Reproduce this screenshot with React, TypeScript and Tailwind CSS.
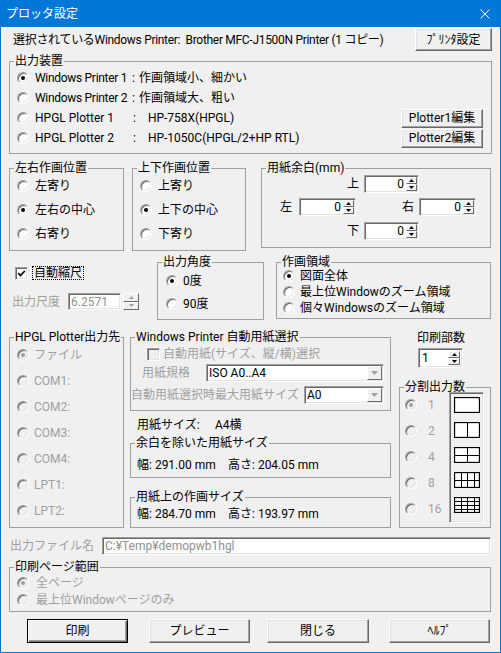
import React from "react";

const SUNKEN =
  "border border-t-[#a0a0a0] border-l-[#a0a0a0] border-r-white border-b-white shadow-[inset_1px_1px_0_#696969,inset_-1px_-1px_0_#e3e3e3]";
const RAISED =
  "border border-t-white border-l-white border-r-[#696969] border-b-[#696969] shadow-[inset_-1px_-1px_0_#a0a0a0,inset_1px_1px_0_#e3e3e3]";
const RAISED_SMALL =
  "border border-t-white border-l-white border-r-[#696969] border-b-[#696969]";
const DIS = "text-[#a0a0a0]";

function Radio({ checked, disabled, className = "" }: { checked?: boolean; disabled?: boolean; className?: string }) {
  return (
    <span
      className={`flex h-[12px] w-[12px] shrink-0 items-center justify-center rounded-full border border-t-[#a0a0a0] border-l-[#a0a0a0] border-r-white border-b-white shadow-[inset_1px_1px_0_#696969,inset_-1px_-1px_0_#e3e3e3] ${
        disabled ? "bg-[#f0f0f0]" : "bg-white"
      } ${className}`}
    >
      {checked && <span className={`h-[4px] w-[4px] rounded-full ${disabled ? "bg-[#a0a0a0]" : "bg-black"}`} />}
    </span>
  );
}

function Check({ checked, disabled, className = "" }: { checked?: boolean; disabled?: boolean; className?: string }) {
  return (
    <span
      className={`flex h-[13px] w-[13px] shrink-0 items-center justify-center ${SUNKEN} ${
        disabled ? "bg-[#f0f0f0]" : "bg-white"
      } ${className}`}
    >
      {checked && (
        <svg width="9" height="9" viewBox="0 0 9 9">
          <path d="M1.2 4.2L3.5 6.6L7.8 2" stroke="black" strokeWidth="1.7" fill="none" />
        </svg>
      )}
    </span>
  );
}

function Btn({ children, className = "", def }: { children: React.ReactNode; className?: string; def?: boolean }) {
  return (
    <button
      type="button"
      className={`flex shrink-0 items-center justify-center bg-[#f0f0f0] leading-[14px] ${
        def
          ? "border border-black shadow-[inset_1px_1px_0_#fff,inset_-1px_-1px_0_#696969,inset_-2px_-2px_0_#a0a0a0]"
          : RAISED
      } ${className}`}
    >
      {children}
    </button>
  );
}

function Group({ title, className = "", children }: { title: string; className?: string; children?: React.ReactNode }) {
  return (
    <fieldset className={`shrink-0 border border-[#a0a0a0] ${className}`}>
      <legend className="ml-[4px] whitespace-nowrap px-[1px] leading-[14px]">{title}</legend>
      {children}
    </fieldset>
  );
}

function Tri({ up, color, w = 5, h = 3 }: { up?: boolean; color: string; w?: number; h?: number }) {
  return (
    <svg width={w} height={h} viewBox={`0 0 ${w} ${h}`}>
      <path d={up ? `M0 ${h}L${w / 2} 0L${w} ${h}Z` : `M0 0L${w} 0L${w / 2} ${h}Z`} fill={color} />
    </svg>
  );
}

function SpinArrows({ className = "", color }: { className?: string; color: string }) {
  return (
    <div className={`flex shrink-0 flex-col ${className}`}>
      <div className={`flex flex-1 items-center justify-center bg-[#f0f0f0] ${RAISED_SMALL}`}>
        <Tri up color={color} />
      </div>
      <div className={`flex flex-1 items-center justify-center bg-[#f0f0f0] ${RAISED_SMALL}`}>
        <Tri color={color} />
      </div>
    </div>
  );
}

function MarginSpin({ className = "" }: { className?: string }) {
  return (
    <div className={`flex h-[18px] shrink-0 bg-white ${SUNKEN} ${className}`}>
      <span className="flex-1 self-center pr-[2px] text-right">0</span>
      <SpinArrows className="my-[1px] mr-[1px] w-[11px]" color="#000" />
    </div>
  );
}

function Combo({ text, className = "" }: { text: string; className?: string }) {
  return (
    <div className={`flex h-[18px] shrink-0 bg-white ${SUNKEN} ${className}`}>
      <span className="flex-1 self-center pl-[2px]">{text}</span>
      <div className={`m-[1px] flex w-[15px] items-center justify-center bg-[#f0f0f0] ${RAISED_SMALL}`}>
        <Tri color="#a0a0a0" w={7} h={4} />
      </div>
    </div>
  );
}

function GridIcon({ cols, rows }: { cols: number; rows: number }) {
  const W = 26;
  const H = 16;
  const lines: React.ReactNode[] = [];
  for (let i = 1; i < cols; i++) {
    const x = Math.round((W * i) / cols) + 0.5;
    lines.push(<path key={`c${i}`} d={`M${x} 0V${H}`} stroke="black" strokeWidth="1" />);
  }
  for (let j = 1; j < rows; j++) {
    const y = Math.round((H * j) / rows) + 0.5;
    lines.push(<path key={`r${j}`} d={`M0 ${y}H${W}`} stroke="black" strokeWidth="1" />);
  }
  return (
    <svg width={W} height={H} viewBox={`0 0 ${W} ${H}`} className="shrink-0">
      <rect x="0.5" y="0.5" width={W - 1} height={H - 1} fill="white" stroke="black" strokeWidth="1.3" />
      {lines}
    </svg>
  );
}

export default function App() {
  return (
    <div className="flex h-[653px] w-[501px] flex-col overflow-hidden border-x border-b border-[#0078d7] bg-[#f0f0f0] font-['Roboto','Noto_Sans_CJK_JP',sans-serif] text-[12px] leading-[14px] text-black">
      {/* Title bar */}
      <div className="flex h-[27px] shrink-0 items-center bg-[#0078d7] pl-[5px] text-white">
        <span>プロッタ設定</span>
        <svg className="ml-auto mr-[10px]" width="10" height="10" viewBox="0 0 10 10">
          <path d="M0.5 0.5L9.5 9.5M9.5 0.5L0.5 9.5" stroke="white" strokeWidth="1" />
        </svg>
      </div>

      {/* Header */}
      <div className="mt-[1px] flex h-[23px] shrink-0 items-center">
        <span className="ml-[12px] whitespace-pre tracking-[-0.3px]">選択されているWindows Printer:  Brother MFC-J1500N Printer (1 コピー)</span>
        <Btn className="ml-auto mr-[8px] h-[23px] w-[77px]">ﾌﾟﾘﾝﾀ設定</Btn>
      </div>

      {/* 出力装置 */}
      <Group title="出力装置" className="ml-[8px] mt-[3px] h-[100px] w-[483px]">
        <div className="flex flex-col">
          <div className="flex h-[20px] items-center">
            <Radio checked className="ml-[7px]" />
            <span className="ml-[6px] w-[97px] shrink-0 whitespace-nowrap tracking-[-0.3px]">Windows Printer 1</span>
            <span>:</span>
            <span className="ml-[4px]">作画領域小、細かい</span>
          </div>
          <div className="flex h-[20px] items-center">
            <Radio className="ml-[7px]" />
            <span className="ml-[6px] w-[97px] shrink-0 whitespace-nowrap tracking-[-0.3px]">Windows Printer 2</span>
            <span>:</span>
            <span className="ml-[4px]">作画領域大、粗い</span>
          </div>
          <div className="flex h-[20px] items-center">
            <Radio className="ml-[7px]" />
            <span className="ml-[6px] w-[98px] shrink-0 whitespace-nowrap">HPGL Plotter 1</span>
            <span>:</span>
            <span className="ml-[12px]">HP-758X(HPGL)</span>
            <Btn className="ml-auto mr-[8px] h-[19px] w-[82px]">Plotter1編集</Btn>
          </div>
          <div className="flex h-[20px] items-center">
            <Radio className="ml-[7px]" />
            <span className="ml-[6px] w-[98px] shrink-0 whitespace-nowrap">HPGL Plotter 2</span>
            <span>:</span>
            <span className="ml-[12px]">HP-1050C(HPGL/2+HP RTL)</span>
            <Btn className="ml-auto mr-[8px] h-[19px] w-[82px]">Plotter2編集</Btn>
          </div>
        </div>
      </Group>

      {/* Row C1 */}
      <div className="mt-[7px] flex shrink-0 items-start">
        <Group title="左右作画位置" className="ml-[8px] h-[90px] w-[115px]">
          <div className="-mt-[1px] flex flex-col">
            {["左寄り", "左右の中心", "右寄り"].map((t, i) => (
              <div key={t} className="flex h-[24px] items-center">
                <Radio checked={i === 1} className="ml-[7px]" />
                <span className="ml-[6px]">{t}</span>
              </div>
            ))}
          </div>
        </Group>
        <Group title="上下作画位置" className="ml-[8px] h-[90px] w-[114px]">
          <div className="-mt-[1px] flex flex-col">
            {["上寄り", "上下の中心", "下寄り"].map((t, i) => (
              <div key={t} className="flex h-[24px] items-center">
                <Radio checked={i === 1} className="ml-[7px]" />
                <span className="ml-[6px]">{t}</span>
              </div>
            ))}
          </div>
        </Group>
        <Group title="用紙余白(mm)" className="ml-[15px] h-[87px] w-[230px]">
          <div className="flex flex-col">
            <div className="flex h-[18px] items-center">
              <span className="ml-[85px] w-[12px]">上</span>
              <MarginSpin className="ml-[5px] w-[55px]" />
            </div>
            <div className="mt-[5px] flex h-[18px] items-center">
              <span className="ml-[18px] w-[12px]">左</span>
              <MarginSpin className="ml-[7px] w-[57px]" />
              <span className="ml-[46px] w-[12px]">右</span>
              <MarginSpin className="ml-[5px] w-[57px]" />
            </div>
            <div className="mt-[6px] flex h-[18px] items-center">
              <span className="ml-[85px] w-[12px]">下</span>
              <MarginSpin className="ml-[5px] w-[55px]" />
            </div>
          </div>
        </Group>
      </div>

      {/* Row C2 */}
      <div className="mt-[4px] flex shrink-0 items-start">
        <div className="ml-[8px] flex w-[148px] shrink-0 flex-col">
          <div className="mt-[11px] flex h-[14px] items-center">
            <Check checked className="ml-[6px]" />
            <span className="ml-[4px] border border-dotted border-black px-[1px] leading-[12px]">自動縮尺</span>
          </div>
          <div className="mt-[13px] flex h-[17px] items-center">
            <span className={`ml-[3px] ${DIS}`}>出力尺度</span>
            <div className={`ml-[8px] flex h-[17px] w-[53px] items-center bg-white pl-[2px] ${SUNKEN}`}>
              <span className="text-[#909090]">6.2571</span>
            </div>
            <SpinArrows className="ml-[2px] h-[17px] w-[16px]" color="#a0a0a0" />
          </div>
        </div>
        <Group title="出力角度" className="h-[65px] w-[107px]">
          <div className="flex flex-col">
            {["0度", "90度"].map((t, i) => (
              <div key={t} className="flex h-[23px] items-center">
                <Radio checked={i === 0} className="ml-[8px]" />
                <span className="ml-[5px]">{t}</span>
              </div>
            ))}
          </div>
        </Group>
        <Group title="作画領域" className="ml-[12px] h-[64px] w-[215px]">
          <div className="-mt-[1px] flex flex-col">
            {["図面全体", "最上位Windowのズーム領域", "個々Windowsのズーム領域"].map((t, i) => (
              <div key={t} className="flex h-[16px] items-center">
                <Radio checked={i === 0} className="ml-[6px]" />
                <span className="ml-[5px]">{t}</span>
              </div>
            ))}
          </div>
        </Group>
      </div>

      {/* Row C3 */}
      <div className="mt-[10px] flex shrink-0 items-start">
        <Group title="HPGL Plotter出力先" className="ml-[8px] h-[198px] w-[115px]">
          <div className="-mt-[2px] flex flex-col">
            {["ファイル", "COM1:", "COM2:", "COM3:", "COM4:", "LPT1:", "LPT2:"].map((t, i) => (
              <div key={t} className="flex h-[26px] items-center">
                <Radio disabled checked={i === 0} className="ml-[7px]" />
                <span className={`ml-[5px] ${DIS}`}>{t}</span>
              </div>
            ))}
          </div>
        </Group>

        <div className="ml-[6px] flex w-[261px] shrink-0 flex-col">
          <Group title="Windows Printer 自動用紙選択" className="h-[81px] w-[261px]">
            <div className="flex flex-col">
              <div className="flex h-[20px] items-center">
                <Check disabled className="ml-[16px]" />
                <span className={`ml-[3px] ${DIS}`}>自動用紙(サイズ、縦/横)選択</span>
              </div>
              <div className="flex h-[18px] items-center">
                <span className={`ml-[11px] ${DIS}`}>用紙規格</span>
                <Combo text="ISO A0..A4" className="ml-auto mr-[6px] w-[178px]" />
              </div>
              <div className="mt-[4px] flex h-[18px] items-center">
                <span className={`whitespace-nowrap ${DIS}`}>自動用紙選択時最大用紙サイズ</span>
                <Combo text="A0" className="ml-auto mr-[6px] w-[80px]" />
              </div>
            </div>
          </Group>
          <div className="mt-[7px] flex h-[14px] items-center">
            <span className="ml-[7px] w-[78px]">用紙サイズ:</span>
            <span>A4横</span>
          </div>
          <Group title="余白を除いた用紙サイズ" className="mt-[4px] h-[42px] w-[261px]">
            <div className="mt-[8px] flex h-[14px] items-center">
              <span className="ml-[6px] w-[91px] whitespace-nowrap">幅: 291.00 mm</span>
              <span className="whitespace-nowrap">高さ: 204.05 mm</span>
            </div>
          </Group>
          <Group title="用紙上の作画サイズ" className="mt-[12px] h-[38px] w-[261px]">
            <div className="mt-[3px] flex h-[14px] items-center">
              <span className="ml-[6px] w-[91px] whitespace-nowrap">幅: 284.70 mm</span>
              <span className="whitespace-nowrap">高さ: 193.97 mm</span>
            </div>
          </Group>
        </div>

        <div className="ml-[7px] flex w-[93px] shrink-0 flex-col">
          <span className="ml-[19px] mt-[1px] h-[14px]">印刷部数</span>
          <div className={`ml-[20px] mt-[3px] flex h-[20px] w-[45px] bg-white ${SUNKEN}`}>
            <span className="flex-1 self-center pl-[3px]">1</span>
            <SpinArrows className="my-[2px] mr-[2px] w-[12px]" color="#000" />
          </div>
          <Group title="分割出力数" className="ml-[1px] mt-[12px] h-[148px] w-[92px]">
            <div className="flex">
              <div className="-mt-[2px] flex w-[49px] shrink-0 flex-col">
                {["1", "2", "4", "8", "16"].map((n, i) => (
                  <div key={n} className="flex h-[26px] items-center">
                    <Radio disabled checked={i === 0} className="ml-[5px]" />
                    <span className={`ml-[11px] ${DIS}`}>{n}</span>
                  </div>
                ))}
              </div>
              <div className={`-mt-[2px] flex h-[131px] w-[35px] shrink-0 flex-col items-center gap-[9px] bg-[#f0f0f0] pt-[4px] ${SUNKEN}`}>
                <GridIcon cols={1} rows={1} />
                <GridIcon cols={2} rows={1} />
                <GridIcon cols={2} rows={2} />
                <GridIcon cols={4} rows={2} />
                <GridIcon cols={4} rows={4} />
              </div>
            </div>
          </Group>
        </div>
      </div>

      {/* 出力ファイル名 */}
      <div className="mt-[9px] flex h-[18px] shrink-0 items-center">
        <span className={`ml-[9px] w-[92px] shrink-0 ${DIS}`}>出力ファイル名</span>
        <div className={`flex h-[18px] w-[389px] items-center bg-white pl-[2px] ${SUNKEN}`}>
          <span className="text-[#909090]">C:¥Temp¥demopwb1hgl</span>
        </div>
      </div>

      {/* 印刷ページ範囲 */}
      <Group title="印刷ページ範囲" className="ml-[8px] mt-[5px] h-[52px] w-[482px]">
        <div className="flex flex-col">
          {["全ページ", "最上位Windowページのみ"].map((t, i) => (
            <div key={t} className="flex h-[17px] items-center">
              <Radio disabled checked={i === 0} className="ml-[7px]" />
              <span className={`ml-[7px] ${DIS}`}>{t}</span>
            </div>
          ))}
        </div>
      </Group>

      {/* Buttons */}
      <div className="mt-[7px] flex h-[24px] shrink-0 items-center">
        <Btn def className="ml-[26px] h-[24px] w-[101px]">印刷</Btn>
        <Btn className="ml-[21px] h-[24px] w-[101px]">プレビュー</Btn>
        <Btn className="ml-[17px] h-[24px] w-[102px]">閉じる</Btn>
        <Btn className="ml-[20px] h-[24px] w-[101px]">ﾍﾙﾌﾟ</Btn>
      </div>
    </div>
  );
}
